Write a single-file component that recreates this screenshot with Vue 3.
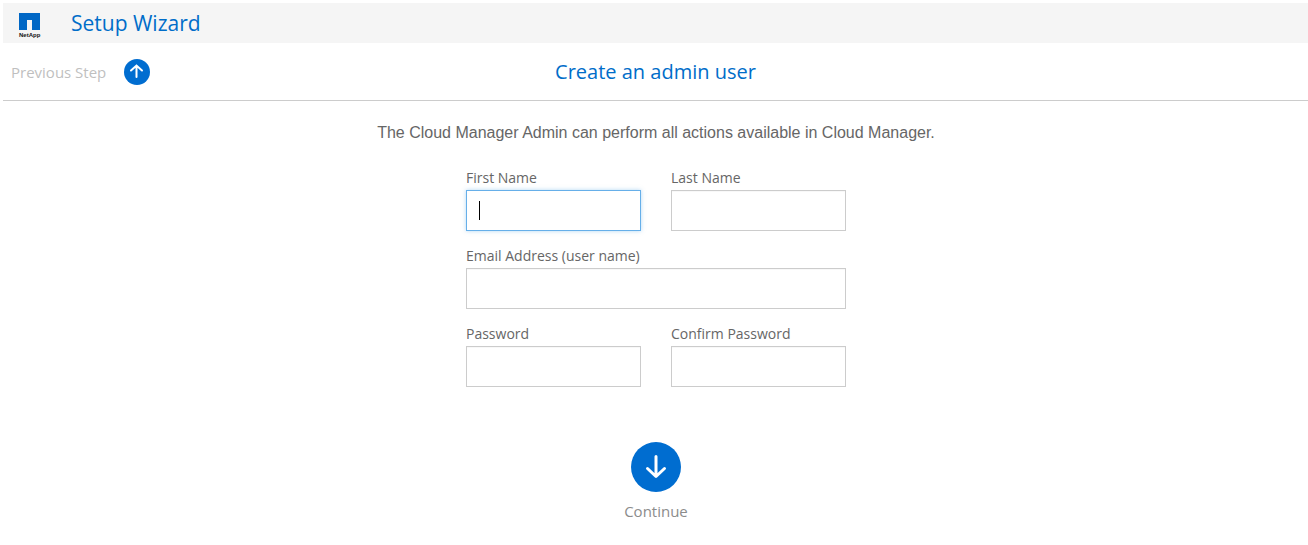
<script setup>
import { onMounted, ref } from 'vue'

const form = ref({ firstName: '', lastName: '', email: '', password: '', confirm: '' })
const focused = ref('firstName')
const firstInput = ref(null)

const fields = [
  { key: 'firstName', label: 'First Name', type: 'text' },
  { key: 'lastName', label: 'Last Name', type: 'text' },
  { key: 'email', label: 'Email Address (user name)', type: 'email', wide: true },
  { key: 'password', label: 'Password', type: 'password' },
  { key: 'confirm', label: 'Confirm Password', type: 'password' },
]

function keepFirst(el, key) {
  if (key === 'firstName') firstInput.value = el
}

onMounted(() => firstInput.value?.focus())
</script>

<template>
  <div class="page">
    <header class="topbar">
      <svg class="logo" width="24" height="26" viewBox="0 0 24 26" role="img" aria-label="NetApp">
        <path d="M0 0H21V17H13V7H8V17H0Z" fill="#0067c5" />
        <text x="0" y="24" class="logo-text">NetApp</text>
      </svg>
      <h1 class="app-title">Setup Wizard</h1>
    </header>

    <div class="stepbar">
      <button type="button" class="previous">
        <span>Previous Step</span>
        <svg width="26" height="26" viewBox="0 0 26 26" aria-hidden="true">
          <circle cx="13" cy="13" r="13" fill="#006dd0" />
          <path d="M12.5 18V7M7 11.5L12.5 6.5L18 11.5" fill="none" stroke="#fff" stroke-width="2" stroke-linecap="round" />
        </svg>
      </button>
      <h2 class="step-title">Create an admin user</h2>
    </div>

    <main class="content">
      <p class="intro">The Cloud Manager Admin can perform all actions available in Cloud Manager.</p>

      <form class="form" @submit.prevent>
        <div class="fields">
          <div v-for="f in fields" :key="f.key" class="field" :class="{ wide: f.wide }">
            <label :for="f.key">{{ f.label }}</label>
            <div class="control">
              <input
                :id="f.key"
                :ref="(el) => keepFirst(el, f.key)"
                v-model="form[f.key]"
                :type="f.type"
                :class="{ active: focused === f.key, empty: !form[f.key] }"
                autocomplete="off"
                @focus="focused = f.key"
              />
              <span v-if="focused === f.key && !form[f.key]" class="caret"></span>
            </div>
          </div>
        </div>

        <button type="submit" class="continue">
          <svg width="50" height="50" viewBox="0 0 50 50" aria-hidden="true">
            <circle cx="25" cy="25" r="25" fill="#006dd0" />
            <path d="M25 14.5V34M16.5 26.5L25 34.5L33.5 26.5" fill="none" stroke="#fff" stroke-width="3" stroke-linecap="round" stroke-linejoin="round" />
          </svg>
          <span>Continue</span>
        </button>
      </form>
    </main>
  </div>
</template>

<style>
body {
  margin: 0;
  background: #fff;
}
</style>

<style scoped>
.page {
  padding: 3px 0 0 3px;
  font-family: "Open Sans", "Noto Sans", sans-serif;
  color: #666;
}

.topbar {
  display: flex;
  align-items: center;
  gap: 28px;
  height: 40px;
  padding-left: 16px;
  background: #f5f5f5;
}

.logo {
  margin-top: 6px;
  overflow: visible;
}

.logo-text {
  font: bold 6px "Liberation Sans", sans-serif;
  fill: #111;
}

.app-title,
.step-title {
  margin: 0;
  font-weight: 400;
  color: #006dc9;
}

.app-title {
  font-size: 21px;
  line-height: 28px;
}

.stepbar {
  display: grid;
  grid-template-columns: 1fr auto 1fr;
  align-items: center;
  height: 57px;
  border-bottom: 1px solid #ccc;
}

.step-title {
  font-size: 20px;
  line-height: 28px;
}

button {
  padding: 0;
  border: 0;
  background: none;
  font: inherit;
  font-size: 15px;
  line-height: 20px;
  cursor: pointer;
}

.previous {
  display: flex;
  align-items: center;
  justify-self: start;
  gap: 18px;
  margin-left: 8px;
  color: #bfbfbf;
}

.content {
  display: flex;
  flex-direction: column;
  align-items: center;
  padding-left: 1px;
}

.intro {
  margin: 22px 0 0;
  font: 16px/20px "Liberation Sans", Arial, sans-serif;
}

.form {
  display: flex;
  flex-direction: column;
  align-items: center;
  width: 380px;
  max-width: 100%;
  margin-top: 25px;
}

.fields {
  display: grid;
  grid-template-columns: 1fr 1fr;
  gap: 15px 30px;
  width: 100%;
}

.wide {
  grid-column: 1 / -1;
}

label {
  display: block;
  padding-bottom: 2px;
  font-size: 14px;
  line-height: 20px;
}

.control {
  position: relative;
}

input {
  display: block;
  box-sizing: border-box;
  width: 100%;
  height: 41px;
  padding: 0 12px;
  border: 1px solid #ccc;
  border-radius: 0;
  outline: 0;
  background: #fff;
  box-shadow: inset 0 1px 1px rgba(0, 0, 0, 0.03);
  font: inherit;
  font-size: 14px;
  color: #333;
  caret-color: #000;
}

input.active {
  border-color: #66afe9;
  box-shadow: 0 0 4px rgba(102, 175, 233, 0.5);
}

input.active.empty {
  caret-color: transparent;
}

.caret {
  position: absolute;
  top: 11px;
  left: 13px;
  width: 1px;
  height: 19px;
  background: #000;
  pointer-events: none;
}

.continue {
  display: flex;
  flex-direction: column;
  align-items: center;
  gap: 9px;
  margin-top: 55px;
  color: #8c8c8c;
}
</style>
